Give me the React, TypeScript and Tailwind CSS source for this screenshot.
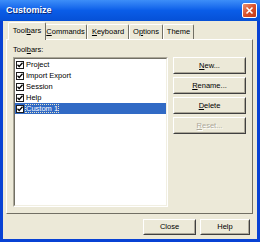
import React from "react";

const font = { fontFamily: '"Liberation Sans", Arial, sans-serif' };

function Tab({ label, u, width, active }: { label: string; u: number; width: string; active?: boolean }) {
  const text =
    u >= 0 ? (
      <span>
        {label.slice(0, u)}
        <span className="underline">{label[u]}</span>
        {label.slice(u + 1)}
      </span>
    ) : (
      <span>{label}</span>
    );
  if (active) {
    return (
      <div
        className={`relative z-10 -mb-px -mr-[2px] flex h-[18px] items-start justify-center rounded-t-[2px] border-l border-t border-r border-white border-r-[#716F64] bg-[#ECE9D8] pt-[4px] ${width}`}
      >
        {text}
      </div>
    );
  }
  return (
    <div
      className={`flex h-[15px] items-start justify-center rounded-t-[2px] border-l border-t border-r border-white border-r-[#716F64] pt-[3px] ${width}`}
    >
      {text}
    </div>
  );
}

function Btn({ label, u, disabled, w = "w-full", h = "h-[17px]" }: { label: string; u?: number; disabled?: boolean; w?: string; h?: string }) {
  return (
    <div className={`${w} ${h} border border-t-white border-l-white border-r-[#404040] border-b-[#404040]`}>
      <div
        className={`flex h-full items-center justify-center border border-t-[#ECE9D8] border-l-[#ECE9D8] border-r-[#ACA899] border-b-[#ACA899] ${
          disabled ? "text-[#ACA899] [text-shadow:1px_1px_0_#fff]" : "text-black"
        }`}
      >
        {u === undefined ? (
          label
        ) : (
          <span>
            {label.slice(0, u)}
            <span className="underline">{label[u]}</span>
            {label.slice(u + 1)}
          </span>
        )}
      </div>
    </div>
  );
}

function Check() {
  return (
    <div className="flex h-[8px] w-[8px] items-center justify-center border border-[#1C1C1C] bg-white">
      <svg width="6" height="6" viewBox="0 0 6 6">
        <path d="M0.5 2.8 L2.2 4.5 L5.5 0.8" stroke="#000" strokeWidth="1.3" fill="none" />
      </svg>
    </div>
  );
}

const toolbars = ["Project", "Import Export", "Session", "Help", "Custom 1"];

export default function App() {
  return (
    <div className="flex h-[242px] w-[260px] flex-col bg-[#0842D4] text-[7.5px] leading-none text-black" style={font}>
      <div className="flex h-[21px] items-center justify-between bg-gradient-to-b from-[#3D8EF8] via-[#0A5DE8] to-[#0650D6] pl-[6px] pr-[3px]">
        <span className="text-[9px] font-bold text-white [text-shadow:1px_1px_0_#0A2A7A]">Customize</span>
        <div className="flex h-[15px] w-[15px] items-center justify-center rounded-[2px] border border-white bg-gradient-to-br from-[#E98F6F] via-[#D9512B] to-[#C23A16]">
          <svg width="9" height="9" viewBox="0 0 9 9">
            <path d="M1.5 1.5 L7.5 7.5 M7.5 1.5 L1.5 7.5" stroke="#fff" strokeWidth="1.6" />
          </svg>
        </div>
      </div>

      <div className="mx-[3px] mb-[3px] flex flex-1 flex-col bg-[#ECE9D8]">
        <div className="flex items-end pl-[5px] pt-[1px]">
          <Tab label="Toolbars" u={4} width="w-[38px]" active />
          <Tab label="Commands" u={0} width="w-[43px]" />
          <Tab label="Keyboard" u={0} width="w-[42px]" />
          <Tab label="Options" u={1} width="w-[34px]" />
          <Tab label="Theme" u={-1} width="w-[31px]" />
        </div>

        <div className="ml-[3px] mr-[4px] flex h-[175px] flex-col border border-t-white border-l-white border-r-[#716F64] border-b-[#716F64] px-[6px] pb-[6px] pt-[6px]">
          <div className="h-[11px]">
            Tool<span className="underline">b</span>ars:
          </div>
          <div className="flex flex-1 gap-[5px]">
            <div className="flex-1 border border-t-[#ACA899] border-l-[#ACA899] border-r-white border-b-white">
              <div className="h-full border border-t-[#716F64] border-l-[#716F64] border-r-[#F1EFE2] border-b-[#F1EFE2] bg-white">
                {toolbars.map((t, i) => {
                  const sel = i === toolbars.length - 1;
                  return (
                    <div
                      key={t}
                      className={`flex h-[11px] items-center gap-[1px] pl-[1px] ${sel ? "bg-[#316AC5] text-white" : ""}`}
                    >
                      <Check />
                      <span
                        className={
                          sel
                            ? "px-[1px] py-[1px] outline-1 outline-dotted outline-[#E8E4C8] -outline-offset-1"
                            : "px-[1px]"
                        }
                      >
                        {t}
                      </span>
                    </div>
                  );
                })}
              </div>
            </div>
            <div className="flex w-[73px] flex-col gap-[3px]">
              <Btn label="New..." u={0} />
              <Btn label="Rename..." u={0} />
              <Btn label="Delete" u={0} />
              <Btn label="Reset..." u={0} disabled />
            </div>
          </div>
        </div>

        <div className="flex justify-end gap-[4px] pr-[7px] pt-[5px]">
          <Btn label="Close" w="w-[53px]" h="h-[16px]" />
          <Btn label="Help" w="w-[50px]" h="h-[16px]" />
        </div>
      </div>
    </div>
  );
}
